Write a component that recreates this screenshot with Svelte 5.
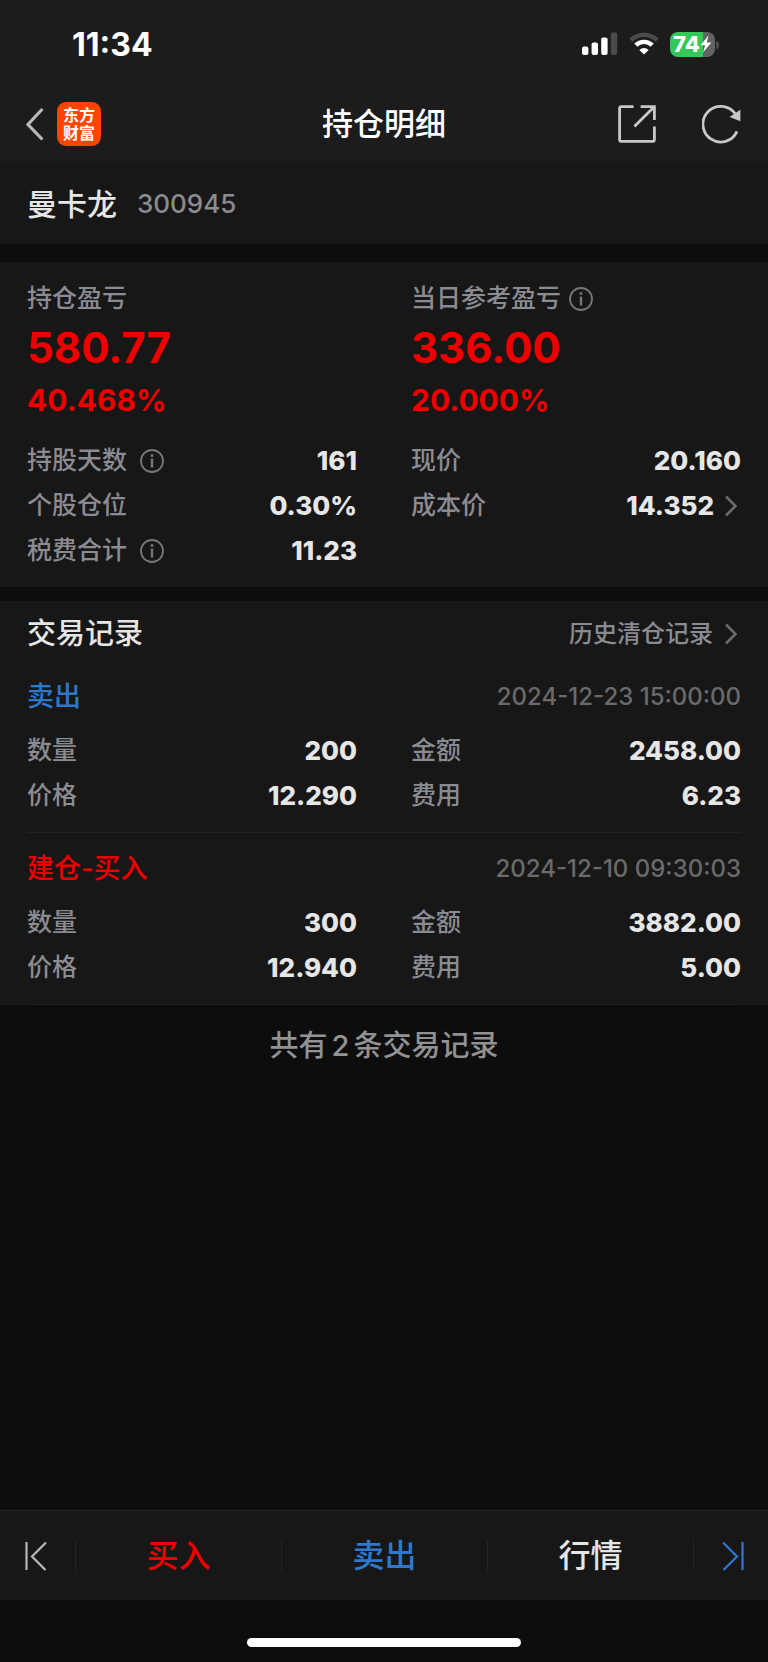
<script lang="ts">
  interface Cell {
    label: string;
    value: string;
    info?: boolean;
    link?: boolean;
  }

  interface TradeRecord {
    id: number;
    side: 'buy' | 'sell';
    title: string;
    time: string;
    cells: Cell[];
  }

  const stock = { name: '曼卡龙', code: '300945' };

  const profits = [
    { label: '持仓盈亏', amount: '580.77', percent: '40.468%', info: false },
    { label: '当日参考盈亏', amount: '336.00', percent: '20.000%', info: true }
  ];

  const position: Cell[] = [
    { label: '持股天数', value: '161', info: true },
    { label: '现价', value: '20.160' },
    { label: '个股仓位', value: '0.30%' },
    { label: '成本价', value: '14.352', link: true },
    { label: '税费合计', value: '11.23', info: true }
  ];

  const records: TradeRecord[] = [
    {
      id: 1,
      side: 'sell',
      title: '卖出',
      time: '2024-12-23 15:00:00',
      cells: [
        { label: '数量', value: '200' },
        { label: '金额', value: '2458.00' },
        { label: '价格', value: '12.290' },
        { label: '费用', value: '6.23' }
      ]
    },
    {
      id: 2,
      side: 'buy',
      title: '建仓-买入',
      time: '2024-12-10 09:30:03',
      cells: [
        { label: '数量', value: '300' },
        { label: '金额', value: '3882.00' },
        { label: '价格', value: '12.940' },
        { label: '费用', value: '5.00' }
      ]
    }
  ];

  const recordCount = $derived(records.length);
</script>

{#snippet infoButton(label: string)}
  <button class="info" aria-label="{label}说明">
    <svg width="24" height="24" viewBox="0 0 24 24" fill="none" stroke="currentColor">
      <circle cx="12" cy="12" r="11" stroke-width="1.8" />
      <path d="M12 9.6v9" stroke-width="2.4" />
      <path d="M12 5.2v2.6" stroke-width="2.6" />
    </svg>
  </button>
{/snippet}

{#snippet chevron()}
  <svg class="chevron" width="14" height="22" viewBox="0 0 14 22" fill="none" stroke="currentColor" stroke-width="2.6">
    <path d="M2 1.5 11.5 11 2 20.5" />
  </svg>
{/snippet}

{#snippet cellGrid(cells: Cell[])}
  <dl class="cells">
    {#each cells as cell (cell.label)}
      <div class="cell">
        <dt>
          {cell.label}
          {#if cell.info}{@render infoButton(cell.label)}{/if}
        </dt>
        <dd>
          {#if cell.link}
            <button class="value-link">{cell.value}{@render chevron()}</button>
          {:else}
            {cell.value}
          {/if}
        </dd>
      </div>
    {/each}
  </dl>
{/snippet}

<div class="page" lang="zh-CN">
  <header>
    <div class="status">
      <time>11:34</time>
      <div class="status-icons">
        <svg width="36" height="24" viewBox="0 0 36 24" fill="#fff" aria-hidden="true">
          <rect x="0" y="14.5" width="6.4" height="8.5" rx="2" />
          <rect x="9.6" y="10.5" width="6.4" height="12.5" rx="2" />
          <rect x="19.2" y="5.5" width="6.4" height="17.5" rx="2" />
          <rect x="28.8" y="0.5" width="6.4" height="22.5" rx="2" fill="#4a4a4a" />
        </svg>
        <svg width="30" height="24" viewBox="0 0 30 24" fill="none" aria-hidden="true">
          <path d="M1.8 8.2a19 19 0 0 1 26.4 0" stroke="#4a4a4a" stroke-width="4.4" />
          <path d="M6.8 13.2a11.8 11.8 0 0 1 16.4 0" stroke="#fff" stroke-width="4.4" />
          <path d="M15 22.6l-4.7-4.6a6.8 6.8 0 0 1 9.4 0z" fill="#fff" />
        </svg>
        <div class="battery">
          <span>74</span>
          <svg width="12" height="18" viewBox="0 0 12 18" fill="#fff" aria-hidden="true">
            <path d="M8.4 0.6 0.6 10.2h4.6L3 17.4l8.4-10H6.8z" />
          </svg>
        </div>
      </div>
    </div>

    <nav class="titlebar">
      <div class="left">
        <button class="icon" aria-label="返回">
          <svg width="18" height="34" viewBox="0 0 18 34" fill="none" stroke="#b8b8b8" stroke-width="3.2">
            <path d="M16.4 2 2 17.5l14.4 15" />
          </svg>
        </button>
        <a class="logo" href="#home"><span>东方</span><span>财富</span></a>
      </div>
      <h1>持仓明细</h1>
      <div class="right">
        <button class="icon" aria-label="分享">
          <svg width="38" height="38" viewBox="0 0 38 38" fill="none" stroke="#c8c8c8" stroke-width="2.8">
            <path d="M15.6 1.6H3.2a1.6 1.6 0 0 0-1.6 1.6v31.6a1.6 1.6 0 0 0 1.6 1.6h31.6a1.6 1.6 0 0 0 1.6-1.6V21.4" />
            <path d="M22.6 1.6h13.8V15M36 2 16.4 21.6" />
          </svg>
        </button>
        <button class="icon" aria-label="刷新">
          <svg width="40" height="40" viewBox="0 0 40 40" fill="none">
            <path d="M35 27.4A17.8 17.8 0 1 1 33.2 9.8" stroke="#c8c8c8" stroke-width="2.8" />
            <path d="M38.4 5.8v11.4L27.6 13z" fill="#c8c8c8" />
          </svg>
        </button>
      </div>
    </nav>
  </header>

  <main>
    <section class="stock">
      <h2>{stock.name}</h2>
      <span>{stock.code}</span>
    </section>

    <section class="summary">
      <div class="profits">
        {#each profits as profit (profit.label)}
          <div>
            <p class="profit-label">
              {profit.label}
              {#if profit.info}{@render infoButton(profit.label)}{/if}
            </p>
            <p class="amount">{profit.amount}</p>
            <p class="percent">{profit.percent}</p>
          </div>
        {/each}
      </div>
      {@render cellGrid(position)}
    </section>

    <section class="records">
      <div class="records-head">
        <h2>交易记录</h2>
        <a href="#history">历史清仓记录{@render chevron()}</a>
      </div>
      {#each records as record (record.id)}
        <article>
          <div class="record-head">
            <h3 class={record.side}>{record.title}</h3>
            <time>{record.time}</time>
          </div>
          {@render cellGrid(record.cells)}
        </article>
      {/each}
    </section>

    <p class="total">共有<span>{recordCount}</span>条交易记录</p>
  </main>

  <footer>
    <nav class="actions">
      <button class="step prev" aria-label="上一只">
        <svg width="22" height="30" viewBox="0 0 22 30" fill="none" stroke="#b8b8b8" stroke-width="2.2">
          <path d="M1.5 1v28M21 1.5 7 15.5 20.5 29" />
        </svg>
      </button>
      <button class="buy">买入</button>
      <button class="sell">卖出</button>
      <button>行情</button>
      <button class="step next" aria-label="下一只">
        <svg width="22" height="30" viewBox="0 0 22 30" fill="none" stroke="#2e78d2" stroke-width="2.2">
          <path d="M20.5 1v28M1 1.5l14 14L1.5 29" />
        </svg>
      </button>
    </nav>
    <div class="home"><span></span></div>
  </footer>
</div>

<style>
  :global(body) {
    margin: 0;
    background: #0d0d0d;
  }

  .page {
    display: flex;
    flex-direction: column;
    min-height: 100vh;
    background: #0d0d0d;
    color: #e6e6e6;
    font-family: Inter, 'Noto Sans CJK SC', sans-serif;
    font-weight: 500;
  }

  h1,
  h2,
  h3,
  p,
  dl,
  dd {
    margin: 0;
    font-weight: 500;
  }

  button {
    display: flex;
    align-items: center;
    justify-content: center;
    padding: 0;
    border: 0;
    background: none;
    color: inherit;
    font: inherit;
    cursor: pointer;
  }

  a {
    color: inherit;
    text-decoration: none;
  }

  svg {
    display: block;
    flex: none;
  }

  header {
    background: #1c1c1c;
  }

  .status {
    display: flex;
    align-items: center;
    justify-content: space-between;
    height: 80px;
    padding: 4px 49px 0 72px;
    color: #fff;
  }

  .status time {
    font-size: 32px;
    font-weight: 700;
  }

  .status-icons {
    display: flex;
    align-items: center;
    gap: 11px;
  }

  .battery {
    position: relative;
    display: flex;
    align-items: center;
    justify-content: center;
    width: 45px;
    height: 25px;
    margin-right: 4px;
    border-radius: 8px;
    background: linear-gradient(to right, #34c759 74%, #636366 74%);
    font-size: 22px;
    font-weight: 800;
    line-height: 25px;
  }

  .battery::after {
    content: '';
    position: absolute;
    right: -4px;
    top: 9px;
    width: 3px;
    height: 8px;
    border-radius: 0 3px 3px 0;
    background: #4a4a4a;
  }

  .titlebar {
    display: grid;
    grid-template-columns: 1fr auto 1fr;
    align-items: center;
    height: 79px;
    padding: 0 26px;
  }

  .titlebar h1 {
    color: #fff;
    font-size: 31px;
    line-height: 44px;
  }

  .left,
  .right {
    display: flex;
    align-items: center;
  }

  .left {
    gap: 13px;
  }

  .right {
    justify-content: flex-end;
    gap: 46px;
  }

  .logo {
    display: flex;
    flex-direction: column;
    align-items: center;
    justify-content: center;
    width: 44px;
    height: 44px;
    border-radius: 9px;
    background: #ff4400;
    color: #fff;
    font-size: 16px;
    font-weight: 700;
    line-height: 18px;
  }

  .stock {
    display: flex;
    align-items: center;
    gap: 20px;
    height: 81px;
    padding: 0 27px;
    background: #171717;
  }

  .stock h2 {
    font-size: 30px;
    line-height: 40px;
  }

  .stock span {
    color: #8b8b92;
    font-size: 26px;
    line-height: 40px;
  }

  .summary {
    margin-top: 18px;
    padding: 14px 27px;
    background: #171717;
  }

  .profits {
    display: grid;
    grid-template-columns: 1fr 1fr;
    column-gap: 54px;
    margin-bottom: 13px;
    color: #ee0000;
  }

  .profit-label {
    display: flex;
    align-items: center;
    gap: 8px;
    color: #8b8b92;
    font-size: 25px;
    line-height: 45px;
  }

  .amount {
    font-size: 42px;
    font-weight: 700;
    line-height: 54px;
  }

  .percent {
    font-size: 30px;
    font-weight: 700;
    line-height: 50px;
  }

  .cells {
    display: grid;
    grid-template-columns: 1fr 1fr;
    column-gap: 54px;
    font-size: 25px;
    line-height: 45px;
  }

  .cell,
  .cell dt {
    display: flex;
    align-items: center;
  }

  .cell {
    justify-content: space-between;
  }

  .cell dt {
    gap: 13px;
    color: #8b8b92;
  }

  .cell dd {
    font-size: 26px;
    font-weight: 800;
  }

  .info {
    color: #77777a;
  }

  .chevron {
    color: #6a6a6e;
  }

  .value-link {
    gap: 10px;
    padding-right: 3px;
  }

  .records {
    margin-top: 14px;
    padding: 6px 27px 0;
    background: #171717;
  }

  .records-head,
  .record-head {
    display: flex;
    align-items: center;
    justify-content: space-between;
    line-height: 40px;
  }

  .records-head {
    height: 54px;
  }

  .records-head h2 {
    font-size: 29px;
  }

  .records-head a {
    display: flex;
    align-items: center;
    gap: 11px;
    padding-right: 3px;
    color: #8b8b92;
    font-size: 24px;
  }

  article {
    padding: 12px 0 14px;
    border-bottom: 1px solid #222;
  }

  .record-head {
    height: 48px;
    margin-bottom: 7px;
  }

  .record-head h3 {
    font-size: 27px;
  }

  .record-head time {
    color: #6a6a6a;
    font-size: 24px;
  }

  h3.buy,
  .actions .buy {
    color: #ee0000;
  }

  h3.sell,
  .actions .sell {
    color: #2e78cc;
  }

  .total {
    padding-top: 18px;
    color: #929292;
    font-size: 29px;
    line-height: 46px;
    text-align: center;
  }

  .total span {
    margin: 0 4px;
  }

  footer {
    margin-top: auto;
  }

  .actions {
    display: flex;
    align-items: center;
    height: 89px;
    border-top: 1px solid #222;
    background: #171717;
  }

  .actions button {
    flex: 1;
    height: 31px;
    border-left: 1px solid #242424;
    font-size: 32px;
    line-height: 31px;
  }

  .actions .step {
    flex: 0 0 75px;
    box-sizing: border-box;
    border-left: 0;
  }

  .actions .prev {
    padding-right: 4px;
  }

  .actions .next {
    padding-left: 4px;
    border-left: 1px solid #242424;
  }

  .home {
    display: flex;
    justify-content: center;
    height: 62px;
  }

  .home span {
    width: 274px;
    height: 9px;
    margin-top: 38px;
    border-radius: 5px;
    background: #fff;
  }
</style>
